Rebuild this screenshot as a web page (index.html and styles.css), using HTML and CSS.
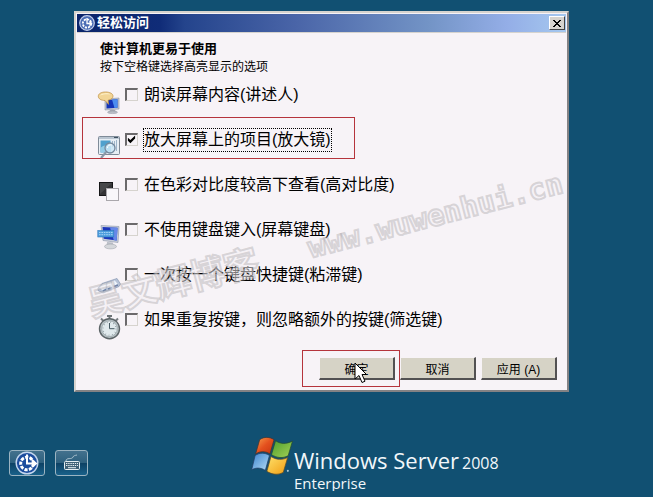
FILE: index.html
```html
<!DOCTYPE html>
<html lang="zh-CN">
<head>
  <meta charset="UTF-8" />
  <meta name="viewport" content="width=device-width, initial-scale=1.0" />
  <title>轻松访问</title>
  <link rel="stylesheet" href="styles.css">
</head>
<body>
  <form class="dialog">
    <div class="title-bar">
      <svg class="title-icon" viewBox="0 0 16 16">
        <circle cx="8" cy="8" r="7.3" fill="#4a6cb4" stroke="#c3cfea" stroke-width="1.2"/>
        <circle cx="8" cy="8.5" r="4.2" fill="none" stroke="#fff" stroke-width="1.8" stroke-dasharray="2.2 1"/>
        <path d="M8 3v5.5h4M10.5 6.5l2 2-2 2" fill="none" stroke="#fff" stroke-width="1.3"/>
      </svg>
      <span class="title">轻松访问</span>
      <button type="button" class="close" aria-label="关闭">
        <svg viewBox="0 0 8 7" shape-rendering="crispEdges"><path d="M0 0h2v1h1v1h2v-1h1v-1h2v1h-1v1h-1v1h-1v1h1v1h1v1h1v1h-2v-1h-1v-1h-2v1h-1v1h-2v-1h1v-1h1v-1h1v-1h-1v-1h-1v-1h-1z"/></svg>
      </button>
    </div>

    <div class="content">
      <h1>使计算机更易于使用</h1>
      <p>按下空格键选择高亮显示的选项</p>

      <div class="options">
        <div class="option">
          <svg class="icon" viewBox="0 0 24 26">
            <path d="M8 10l14-1v11l-14 1z" fill="#c3c8d2" stroke="#8b93a5" stroke-width=".6"/>
            <path d="M9.500 11l11-.8v8.600l-11 .8z" fill="#1434b8"/>
            <path d="M15 10.600l5.500-.4v8.600l-3 .2z" fill="#4c8df0"/>
            <path d="M13 21h5l1 2h-7z" fill="#a4a9b3"/>
            <ellipse cx="15.500" cy="23.300" rx="5" ry="1.300" fill="#b9bdc6" stroke="#858b98" stroke-width=".4"/>
            <path d="M8.500 3C4 3 1.300 4.800 1.300 7.300c0 2.400 2.700 4.200 6.700 4.200l3.600 3.900-.5-4.200c3.100-.6 4.900-2.200 4.900-4C16 4.700 13 3 8.500 3z" fill="#f2d596" stroke="#bd8d3e" stroke-width=".7"/>
            <path d="M3 6.500C5 4 11 3.600 13.500 5.500 10 5 6 5.200 3 6.500z" fill="#fff3ce"/>
          </svg>
          <input type="checkbox" id="narrator">
          <label for="narrator">朗读屏幕内容(讲述人)</label>
        </div>
        <div class="option">
          <svg class="icon" viewBox="0 0 24 26">
            <rect x="1.500" y="2.500" width="21" height="18" rx="1" fill="#e7eef4" stroke="#7f8b98"/>
            <path d="M2 3h20v2H2z" fill="#b9c5d1"/>
            <path d="M17 3.500h4" stroke="#405060"/>
            <rect x="3.500" y="6.500" width="10" height="12" fill="#4fa0cd"/>
            <path d="M3.500 14c3-3 6-2 10-6v10.500h-10z" fill="#92cce6"/>
            <path d="M15.500 7v6M17.500 7v8M19.500 6v11" stroke="#9eb6ca"/>
            <circle cx="13" cy="14" r="5" fill="#c8e6f5" fill-opacity=".75" stroke="#74899d" stroke-width="1.300"/>
            <path d="M10.500 14a3 3 0 0 1 4-3" stroke="#fff" fill="none"/>
            <path d="M9.200 18L4 24" stroke="#8998a8" stroke-width="2.200"/>
          </svg>
          <input type="checkbox" id="magnifier" checked>
          <label for="magnifier" class="focused">放大屏幕上的项目(放大镜)</label>
        </div>
        <div class="option">
          <svg class="icon" viewBox="0 0 24 26">
            <rect x="2.500" y="3.500" width="13" height="13" fill="#343436" stroke="#161618"/>
            <path d="M3 4h12L3 15z" fill="#48484a"/>
            <rect x="9.500" y="9.500" width="12" height="12" fill="#f9f7fa" stroke="#aaa7ac"/>
          </svg>
          <input type="checkbox" id="contrast">
          <label for="contrast">在色彩对比度较高下查看(高对比度)</label>
        </div>
        <div class="option">
          <svg class="icon" viewBox="0 0 24 26">
            <path d="M4 1.500l18 1-1 16-15-2z" fill="#c8ceda" stroke="#8c95a8" stroke-width=".6"/>
            <path d="M5.500 3l15 .8-.8 12.700-13-1.700z" fill="#1c36bb"/>
            <path d="M13 3.400l7.500.4-.8 12.700-3-.4z" fill="#6688e8"/>
            <path d="M10 18l6 .6.5 3.400h-7z" fill="#bbbfc8"/>
            <ellipse cx="13.500" cy="22.500" rx="6" ry="2.400" fill="#d5d7db" stroke="#9a9ea7" stroke-width=".5"/>
            <rect x=".8" y="6.500" width="16" height="6.500" fill="#4d9ddd" stroke="#2c79bd" stroke-width=".6"/>
            <path d="M2 8.500h14M2 10.700h14" stroke="#a5d3f4" stroke-width="1" stroke-dasharray="1.600 .8"/>
          </svg>
          <input type="checkbox" id="keyboard">
          <label for="keyboard">不使用键盘键入(屏幕键盘)</label>
        </div>
        <div class="option">
          <svg class="icon" viewBox="0 0 24 26">
            <path d="M1 19L5 14.500 20 9.500l3.500 5.500-1.500 2.500L6 24l-5-2.500z" fill="#b7c3d8" stroke="#8797b1" stroke-width=".7"/>
            <path d="M3 19l3-4 3-.8-.5 5.800-3 1.500zM10 18.500l.5-4.500 3-1 1.500 4.500-3.500 1.500zM16 16.500l-1.300-4 3-1 3 3.500-3 1.500z" fill="#f2f5fa"/>
            <path d="M5.700 22l3.500-1.500M11 20l4-1.500M17 17.500l4-1.500" stroke="#6f83a8" stroke-width="1.400"/>
          </svg>
          <input type="checkbox" id="sticky">
          <label for="sticky">一次按一个键盘快捷键(粘滞键)</label>
        </div>
        <div class="option">
          <svg class="icon" viewBox="0 0 24 26">
            <path d="M10 1h5v2h-1.500v3h-2V3H10z" fill="#6d7376"/>
            <path d="M4 4.500l3 3M21 4.500l-3 3" stroke="#777d80" stroke-width="2"/>
            <circle cx="12.500" cy="14.700" r="10" fill="#b8c2c6" stroke="#5c6467" stroke-width="1.400"/>
            <circle cx="12.500" cy="14.700" r="7.800" fill="#e0e9ec" stroke="#8a9599" stroke-width=".6"/>
            <circle cx="12.500" cy="14.700" r="6.500" fill="none" stroke="#65767d" stroke-width="1.200" stroke-dasharray=".5 2.900"/>
            <path d="M12.500 9v5.700h5" fill="none" stroke="#465a63" stroke-width="1"/>
          </svg>
          <input type="checkbox" id="filter">
          <label for="filter">如果重复按键，则忽略额外的按键(筛选键)</label>
        </div>
        <span class="mark mark-option"></span>
      </div>

      <div class="buttons">
        <button type="button" class="push">确定
          <svg class="cursor" viewBox="0 0 13 22"><path d="M1 1v16l4-3.500 3 7 3-1.300-3-6.700h4.500z" fill="#fff" stroke="#000"/></svg>
        </button>
        <button type="button" class="push">取消</button>
        <button type="button" class="push">应用 (A)</button>
        <span class="mark mark-ok"></span>
      </div>
    </div>

    <div class="watermark"><span class="name">吴文辉博客</span><span class="site">www.wuwenhui.cn</span></div>
  </form>

  <footer>
    <button type="button" class="tool" aria-label="轻松访问">
      <svg viewBox="0 0 24 24">
        <circle cx="12" cy="12" r="10.800" fill="#1c4d9e" stroke="#c5d7ee" stroke-width="1.400"/>
        <circle cx="12" cy="12.500" r="6.300" fill="none" stroke="#fff" stroke-width="3" stroke-dasharray="3.200 1.300"/>
        <circle cx="12" cy="12.500" r="4" fill="#1c4d9e"/>
        <path d="M12 3.500v9h8M17 9l4 3.500-4 3.500" fill="none" stroke="#fff" stroke-width="2"/>
      </svg>
    </button>
    <button type="button" class="tool tool-keyboard" aria-label="屏幕键盘">
      <svg viewBox="0 0 24 24">
        <path d="M6 10c0-4 6-1 7-4 .6-1.500 2-1.500 4-2" fill="none" stroke="#a9c0cd" stroke-width="1"/>
        <rect x="4.500" y="10.500" width="15" height="8" rx="1" fill="#3f6176" stroke="#e5eef2"/>
        <path d="M6 12.500h12M6 14.500h12" stroke="#e5eef2" stroke-width="1.200" stroke-dasharray="1.400 .8"/>
        <path d="M8 16.700h8" stroke="#e5eef2" stroke-width="1"/>
      </svg>
    </button>
    <div class="logo">
      <svg class="flag" viewBox="0 0 42 38">
        <defs>
          <linearGradient id="red" x1="0" y1="0" x2="1" y2="1"><stop offset="0" stop-color="#f7a04a"/><stop offset=".5" stop-color="#e4501e"/><stop offset="1" stop-color="#c2340f"/></linearGradient>
          <linearGradient id="green" x1="0" y1="0" x2="1" y2="1"><stop offset="0" stop-color="#4d9c2d"/><stop offset="1" stop-color="#a4d356"/></linearGradient>
          <linearGradient id="blue" x1="0" y1="0" x2="1" y2="1"><stop offset="0" stop-color="#3c83ce"/><stop offset="1" stop-color="#b3dcf6"/></linearGradient>
          <linearGradient id="yellow" x1="0" y1="0" x2="1" y2="1"><stop offset="0" stop-color="#ffe26b"/><stop offset="1" stop-color="#f09c12"/></linearGradient>
        </defs>
        <path d="M8.500 3.500C13 .5 18 .7 22.500 3.500L18.500 17.500C14 14.500 9 14.500 4.500 17.500z" fill="url(#red)" stroke="#45322f" stroke-width=".7"/>
        <path d="M24 4.500C29 8 34 8 40.500 5L36.300 19.200C31 22 25.500 21.500 20 18.200z" fill="url(#green)" stroke="#25492f" stroke-width=".7"/>
        <path d="M4 19C8.500 16 13.500 16 18 19L14 33.500C9 30.500 4.500 30.800 0.700 33z" fill="url(#blue)" stroke="#243e66" stroke-width=".7"/>
        <path d="M19.500 20C25 23.500 30.500 23.500 35.800 21L31.500 35.500C26 38.500 20.500 37.500 15.500 34.500z" fill="url(#yellow)" stroke="#5c4c27" stroke-width=".7"/>
        <circle cx="36" cy="34" r="1" fill="#a8c5d2"/>
      </svg>
      <div class="brand">
        <div class="product">Windows Server<span class="year">2008</span></div>
        <div class="edition">Enterprise</div>
      </div>
    </div>
  </footer>
</body>
</html>
```

FILE: styles.css
```css
* {
  box-sizing: border-box;
}
body {
  margin: 0;
  background: #115072;
  color: #000;
  font-family: "Liberation Sans", "Noto Sans CJK SC", sans-serif;
}
button {
  padding: 0;
  font-family: inherit;
}
.dialog {
  position: relative;
  margin: 11px 84px 0 74px;
  background: #f7f3f7;
  border: 2px solid #d6d3ce;
  border-right-color: #848284;
  border-bottom-color: #848284;
  padding: 1px;
}
.title-bar {
  display: flex;
  align-items: center;
  gap: 2px;
  height: 19px;
  padding: 0 1px 0 2px;
  background: linear-gradient(90deg, #0a246a 0%, #102c78 17%, #24448c 22%, #4a65a8 45%, #7394c6 72%, #94aee7 88%, #a5c8ef 100%);
  border-bottom: 1px solid #d6d3ce;
}
.title-icon {
  width: 16px;
  height: 16px;
}
.title {
  flex: 1;
  color: #fff;
  font-size: 13px;
  font-weight: bold;
  line-height: 18px;
}
.close {
  display: flex;
  align-items: center;
  justify-content: center;
  width: 16px;
  height: 14px;
  background: #d6d3ce;
  border: 1px solid #fff;
  border-right-color: #424142;
  border-bottom-color: #424142;
}
.close svg {
  width: 8px;
  height: 7px;
}
.content {
  padding: 8px 9px 9px 20px;
}
h1, p {
  margin: 0 0 0 3px;
  font-size: 13px;
  line-height: 16px;
}
p {
  font-size: 12px;
  line-height: 20px;
}
.options {
  position: relative;
  display: grid;
  grid-auto-rows: 26px;
  gap: 19px;
  margin-top: 5px;
}
.option {
  display: flex;
  align-items: center;
}
.icon {
  flex: none;
  width: 24px;
  height: 26px;
  margin: 14px 4px 0 0;
}
.option input {
  appearance: none;
  flex: none;
  width: 13px;
  height: 13px;
  margin: 0 6px 2px 0;
  background: #f7f3f7;
  border: 2px solid #6b696b;
  border-right: 1px solid #d6d3ce;
  border-bottom: 1px solid #d6d3ce;
}
.option input:checked::after {
  content: "";
  display: block;
  width: 9px;
  height: 9px;
  background: #000;
  clip-path: polygon(10% 35%, 38% 62%, 90% 10%, 90% 45%, 38% 97%, 10% 70%);
}
.option label {
  font-size: 16px;
  line-height: 22px;
  white-space: nowrap;
}
.focused {
  outline: 1px dotted #000;
}
/* red highlight frames */
.mark {
  position: absolute;
  border: 1px solid #b5343c;
  pointer-events: none;
}
.mark-option {
  left: -15px;
  top: 35px;
  width: 273px;
  height: 42px;
}
.mark-ok {
  right: 157px;
  top: -7px;
  width: 98px;
  height: 37px;
}
.buttons {
  position: relative;
  display: flex;
  justify-content: flex-end;
  gap: 5px;
  margin-top: 24px;
}
.push {
  position: relative;
  width: 76px;
  height: 23px;
  background: #d6d3c6;
  border: 1px solid #f7f3f7;
  border-right: 2px solid #525152;
  border-bottom: 2px solid #525152;
  color: #000;
  font-size: 12px;
}
.cursor {
  position: absolute;
  left: 34px;
  top: 4px;
  width: 13px;
  height: 22px;
}
.watermark {
  position: absolute;
  left: 5px;
  top: 211px;
  display: flex;
  align-items: center;
  gap: 52px;
  transform: rotate(-14.5deg);
  color: rgba(243, 240, 243, 0.5);
  -webkit-text-stroke: 2px rgba(165, 162, 165, 0.4);
  font-weight: bold;
  line-height: 40px;
  white-space: nowrap;
  pointer-events: none;
}
.name {
  font-size: 35px;
}
.site {
  font-family: "DejaVu Sans Mono", monospace;
  font-size: 29px;
}
footer {
  display: flex;
  align-items: flex-start;
  gap: 10px;
  padding: 44px 9px 0;
}
.tool {
  display: flex;
  align-items: center;
  justify-content: center;
  width: 36px;
  height: 26px;
  margin-top: 14px;
  background: linear-gradient(#43718d 0%, #2e617f 48%, #0d4265 52%, #19618a 100%);
  border: 1px solid #9bb4c2;
  border-radius: 3px;
}
.tool svg {
  width: 24px;
  height: 24px;
}
.tool-keyboard {
  width: 33px;
}
.logo {
  display: flex;
  margin-left: 153px;
  color: #f1f7fa;
  font-family: "Open Sans", sans-serif;
}
.flag {
  width: 43px;
  height: 39px;
}
.brand {
  padding-top: 12px;
}
.product {
  font-size: 22px;
  line-height: 24px;
  white-space: nowrap;
}
.year {
  margin-left: 3px;
  font-size: 16px;
}
.edition {
  font-size: 15px;
  line-height: 16px;
}
```
